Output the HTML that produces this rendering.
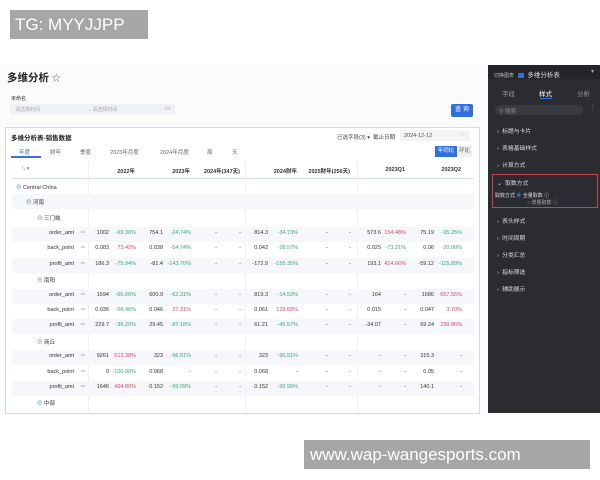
<!DOCTYPE html>
<html><head><meta charset="utf-8"><style>
*{margin:0;padding:0;box-sizing:border-box}
body{width:600px;height:480px;background:#fff;position:relative;overflow:hidden;font-family:"Liberation Sans","Noto Sans CJK SC",sans-serif}
.a{position:absolute;white-space:nowrap}
.t{font-size:5.5px;color:#333}
.r{text-align:right}
.g{color:#3aa57a}.p{color:#d8476e}
.row{position:absolute;left:12px;width:462px;height:15px}
.alt{background:#f5f7fb}
.side{font-size:5.8px;color:#ddd}
</style></head><body>
<div class="a" style="left:10px;top:10px;width:138px;height:29px;background:#a6a6a6;color:#fff;font-size:17px;line-height:29px;padding-left:5px">TG: MYYJJPP</div>

<div class="a" style="left:0;top:65px;width:490px;height:350px;background:#fbfbfc"></div>
<div class="a" style="left:7px;top:70px;font-size:10.5px;font-weight:bold;color:#222">多维分析 <span style="font-weight:normal;font-size:9px;color:#666">☆</span></div>
<div class="a" style="left:11px;top:95px;font-size:5px;color:#333">未命名</div>
<div class="a" style="left:10px;top:104px;width:165px;height:11px;background:#f1f2f4;border-radius:2px"></div>
<div class="a" style="left:15px;top:106px;font-size:5px;color:#aaa">请选择时间</div>
<div class="a" style="left:86px;top:106px;font-size:5px;color:#aaa">→ 请选择时间</div>
<div class="a" style="left:165px;top:105px;font-size:6px;color:#777">▭</div>
<div class="a" style="left:451px;top:104px;width:22px;height:13px;background:#2f6fde;border-radius:2px;color:#fff;font-size:6px;line-height:13px;text-align:center">查 询</div>

<div class="a" style="left:5px;top:127px;width:475px;height:287px;background:#fff;border:1px solid #cfdbe6"></div>
<div class="a" style="left:11px;top:132px;font-size:6.5px;font-weight:bold;color:#222">多维分析表-销售数据</div>
<div class="a" style="left:337px;top:133px;font-size:5.5px;color:#444">已选字段(3) ▾ &nbsp;截止日期</div>
<div class="a" style="left:400px;top:130px;width:70px;height:11px;background:#f3f4f6"></div>
<div class="a" style="left:404px;top:133px;font-size:5.5px;color:#555">2024-12-12</div>
<div class="a" style="left:459px;top:131px;font-size:6px;color:#bbb">▭</div>
<div class="a t" style="left:19px;top:148px;color:#3a6fd8">年度</div>
<div class="a" style="left:11px;top:156px;width:30px;height:1.5px;background:#3a6fd8"></div>
<div class="a t" style="left:50px;top:148px;color:#666">财年</div>
<div class="a t" style="left:80px;top:148px;color:#666">季度</div>
<div class="a t" style="left:110px;top:148px;color:#666">2023年月度</div>
<div class="a t" style="left:160px;top:148px;color:#666">2024年月度</div>
<div class="a t" style="left:207px;top:148px;color:#666">周</div>
<div class="a t" style="left:232px;top:148px;color:#666">天</div>
<div class="a" style="left:435px;top:146px;width:22px;height:11px;background:#2f6fde;color:#fff;font-size:5.5px;line-height:11px;text-align:center">年同比</div>
<div class="a" style="left:457px;top:146px;width:15px;height:11px;background:#f0f0f0;color:#555;font-size:5.5px;line-height:11px;text-align:center">环比</div>

<div class="a" style="left:12px;top:178px;width:462px;height:1px;background:#d5dce6"></div>
<div class="a" style="left:88px;top:162px;width:1px;height:250px;background:#eef0f3"></div>
<div class="a" style="left:245px;top:162px;width:1px;height:250px;background:#eef0f3"></div>
<div class="a" style="left:357px;top:162px;width:1px;height:250px;background:#eef0f3"></div>
<div class="a t" style="left:22px;top:166px;color:#888">ᵗ₁ ▾</div>
<div class="a t r" style="left:95px;top:167px;width:40px;font-weight:bold">2022年</div>
<div class="a t r" style="left:150px;top:167px;width:40px;font-weight:bold">2023年</div>
<div class="a t r" style="left:190px;top:167px;width:50px;font-weight:bold">2024年(347天)</div>
<div class="a t r" style="left:257px;top:167px;width:40px;font-weight:bold">2024财年</div>
<div class="a t r" style="left:290px;top:167px;width:60px;font-weight:bold">2025财年(256天)</div>
<div class="a t r" style="left:365px;top:167px;width:40px;font-weight:bold">2023Q1</div>
<div class="a t r" style="left:421px;top:167px;width:40px;font-weight:bold">2023Q2</div>

<div class="row" style="top:194px;background:#f5f7fb"></div>
<div class="a t" style="left:16px;top:183px"><span style="color:#3a6fd8">⊖</span> Central China</div>
<div class="a t" style="left:26px;top:198px"><span style="color:#3a6fd8">⊖</span> 河南</div>
<div class="a t" style="left:37px;top:214px"><span style="color:#3a6fd8">⊖</span> 三门峡</div>
<div class="a t" style="left:37px;top:276px"><span style="color:#3a6fd8">⊖</span> 南阳</div>
<div class="a t" style="left:37px;top:338px"><span style="color:#3a6fd8">⊖</span> 商丘</div>
<div class="a t" style="left:37px;top:399px"><span style="color:#3a6fd8">⊖</span> 中部</div>

<div id="rows"></div>
<script>
var R=[
[230,1,"order_amt","1002","-69.36%g","754.1","-24.74%g","-","-","814.3","-34.73%g","-","-","573.6","154.48%p","75.19","-95.25%g"],
[245,0,"back_point","0.083","73.42%p","0.038","-54.74%g","-","-","0.042","-28.57%g","-","-","0.025","-73.21%g","0.06","-20.00%g"],
[261,1,"profit_amt","186.3","-75.94%g","-81.4","-143.70%g","-","-","-172.9","-155.35%g","-","-","193.1","414.66%p","-59.12","-115.89%g"],
[292,1,"order_amt","1594","-65.66%g","600.9","-62.31%g","-","-","819.3","-14.53%g","-","-","164","-","1686","657.55%p"],
[307,0,"back_point","0.036","-58.46%g","0.046","27.31%p","-","-","0.061","129.69%p","-","-","0.015","-","0.047","3.70%p"],
[322,1,"profit_amt","229.7","-36.20%g","29.45","-87.18%g","-","-","61.21","-45.57%g","-","-","-34.07","-","69.24","299.86%p"],
[353,1,"order_amt","9261","513.38%p","323","-96.51%g","-","-","323","-96.51%g","-","-","-","-","315.3","-"],
[369,0,"back_point","0","-100.00%g","0.068","-","-","-","0.068","-","-","-","-","-","0.05","-"],
[384,1,"profit_amt","1646","494.89%p","0.152","-99.99%g","-","-","0.152","-99.99%g","-","-","-","-","140.1","-"]];
var X=[109,136,163,191,217,241,268,298,328,351,381,406,434,462];
var h="";
R.forEach(function(r){
 if(r[1])h+='<div class="row alt" style="top:'+(r[0]-3)+'px"></div>';
 h+='<div class="a t r" style="left:30px;width:44px;top:'+r[0]+'px">'+r[2]+'</div><div class="a t" style="left:80px;top:'+r[0]+'px;color:#aaa">≔</div>';
 for(var i=0;i<14;i++){var v=r[i+3],c="";
  if(/[gp]$/.test(v)){c=v.slice(-1);v=v.slice(0,-1);}
  h+='<div class="a t r '+c+'" style="left:'+(X[i]-40)+'px;width:40px;top:'+r[0]+'px">'+v+'</div>';}
});
document.getElementById("rows").innerHTML=h;
</script>

<div class="a" style="left:488px;top:65px;width:112px;height:348px;background:#2b2c31"></div>
<div class="a" style="left:488px;top:65px;width:112px;height:14px;background:#24252a"></div>
<div class="a side" style="left:494px;top:69px;font-size:5px;color:#bbb">切换图表 <span style="display:inline-block;width:6px;height:5px;background:#3a6fd8;vertical-align:middle;margin:0 3px"></span><span style="font-size:6.5px;color:#ddd">多维分析表</span></div>
<div class="a side" style="left:591px;top:69px;color:#aaa">▾</div>
<div class="a side" style="left:502px;top:88px;font-size:6.5px;color:#999">字段</div>
<div class="a side" style="left:539px;top:88px;font-size:6.5px;color:#fff">样式</div>
<div class="a" style="left:540px;top:98px;width:12px;height:1px;background:#3a6fd8"></div>
<div class="a side" style="left:577px;top:88px;font-size:6.5px;color:#999">分析</div>
<div class="a" style="left:495px;top:105px;width:88px;height:10px;background:#3a3b41;border-radius:5px"></div>
<div class="a side" style="left:499px;top:106px;color:#888">⚲ 搜索</div>
<div class="a side" style="left:590px;top:105px;color:#888">⋮</div>
<div class="a side" style="left:497px;top:126px">›&nbsp; 标题与卡片</div>
<div class="a side" style="left:497px;top:143px">›&nbsp; 表格基础样式</div>
<div class="a side" style="left:497px;top:160px">›&nbsp; 计算方式</div>
<div class="a" style="left:492px;top:174px;width:106px;height:34px;border:1.5px solid #c8434a"></div>
<div class="a side" style="left:497px;top:178px">⌄&nbsp; 取数方式</div>
<div class="a side" style="left:495px;top:192px;font-size:5px">取数方式 <span style="color:#3a6fd8">◉</span> 全量取数 ⓘ</div>
<div class="a side" style="left:527px;top:199px;font-size:5px;color:#aaa">○ 增量取数 ⓘ</div>
<div class="a side" style="left:497px;top:216px">›&nbsp; 表头样式</div>
<div class="a side" style="left:497px;top:233px">›&nbsp; 时间周期</div>
<div class="a side" style="left:497px;top:250px">›&nbsp; 分类汇总</div>
<div class="a side" style="left:497px;top:267px">›&nbsp; 指标筛选</div>
<div class="a side" style="left:497px;top:284px">›&nbsp; 辅助展示</div>

<div class="a" style="left:304px;top:440px;width:286px;height:29px;background:#a6a6a6;color:#fff;font-size:17px;line-height:29px;padding-left:6px">www.wap-wangesports.com</div>
</body></html>
